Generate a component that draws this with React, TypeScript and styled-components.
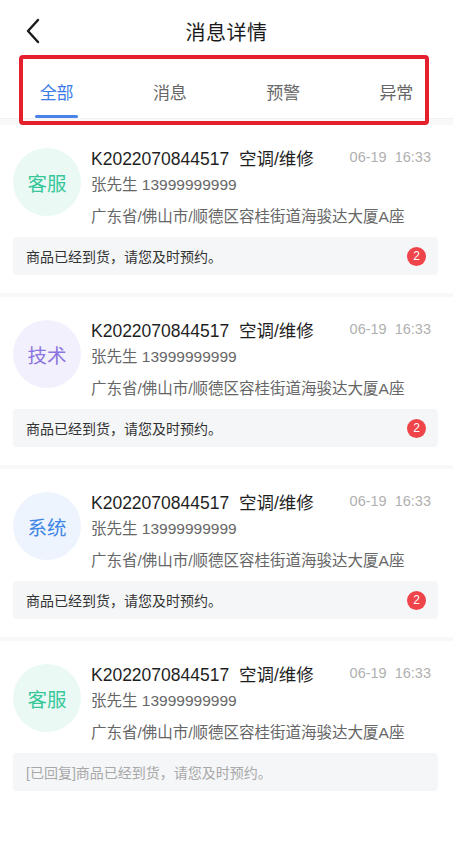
import * as React from 'react'
import styled, { createGlobalStyle } from 'styled-components'

const GlobalStyle = createGlobalStyle`
  html, body {
    margin: 0;
    padding: 0;
    background: #ffffff;
  }
  body {
    font-family: "Liberation Sans", "Noto Sans CJK SC", sans-serif;
    color: #222;
  }
`

const Screen = styled.div`
  position: relative;
  width: 453px;
  min-height: 863px;
  background: #ffffff;
  overflow: hidden;
`

const Header = styled.div`
  display: flex;
  align-items: center;
  justify-content: center;
  height: 56px;
  position: relative;
`

const BackButton = styled.div`
  position: absolute;
  left: 22px;
  top: 17px;
  width: 22px;
  height: 28px;
  display: flex;
  align-items: center;
  justify-content: center;
`

const Title = styled.div`
  font-size: 20px;
  color: #1a1a1a;
  margin-top: 6px;
  letter-spacing: 0.5px;
`

const TabBar = styled.div`
  position: relative;
  display: flex;
  height: 62px;
  border-bottom: 1px solid #f2f2f2;
`

const Tab = styled.div<{ $active?: boolean }>`
  flex: 1;
  display: flex;
  flex-direction: column;
  align-items: center;
  justify-content: flex-start;
  padding-top: 23px;
  font-size: 17px;
  color: ${p => (p.$active ? '#3b7be8' : '#666')};
  position: relative;
`

const Underline = styled.div`
  position: absolute;
  bottom: 0;
  width: 43px;
  height: 3px;
  border-radius: 2px;
  background: #4a84ea;
`

// annotation frame drawn over the tab bar
const Highlight = styled.div`
  position: absolute;
  left: 19px;
  top: 55px;
  width: 402px;
  height: 62px;
  border: 4.5px solid #e5202e;
  border-radius: 4px;
  pointer-events: none;
`

const List = styled.div`
  display: flex;
  flex-direction: column;
  gap: 4px;
  background: #f8f8f9;
  padding-top: 6px;
`

const Card = styled.div`
  background: #ffffff;
  padding: 18px 15px 18px 13px;
`

const Top = styled.div`
  display: flex;
  align-items: flex-start;
`

const Avatar = styled.div<{ $color: string; $bg: string }>`
  flex: 0 0 68px;
  width: 68px;
  height: 68px;
  margin-top: 5px;
  margin-right: 10px;
  border-radius: 50%;
  background: ${p => p.$bg};
  color: ${p => p.$color};
  font-size: 19.5px;
  display: flex;
  align-items: center;
  justify-content: center;
`

const Info = styled.div`
  flex: 1;
  display: flex;
  flex-direction: column;
  min-width: 0;
  padding-right: 7px;
`

const TitleRow = styled.div`
  display: flex;
  align-items: center;
  justify-content: space-between;
  height: 28px;
`

const OrderTitle = styled.div`
  font-size: 17.5px;
  color: #1f1f1f;
  white-space: pre;
`

const Time = styled.div`
  font-size: 14.5px;
  color: #b0b0b0;
  white-space: pre;
`

const SubLine = styled.div<{ $gap?: number }>`
  font-size: 15.5px;
  color: #666;
  height: 28px;
  line-height: 28px;
  margin-top: ${p => p.$gap || 0}px;
  white-space: pre;
`

const MessageBox = styled.div`
  margin-top: 6px;
  height: 38px;
  border-radius: 4px;
  background: #f5f6f8;
  display: flex;
  align-items: center;
  justify-content: space-between;
  padding: 0 12px 0 13px;
`

const MessageText = styled.div<{ $muted?: boolean }>`
  font-size: 14px;
  color: ${p => (p.$muted ? '#a8a8a8' : '#333')};
`

const Badge = styled.div`
  width: 19px;
  height: 19px;
  border-radius: 50%;
  background: #f0444b;
  color: #fff;
  font-size: 12px;
  display: flex;
  align-items: center;
  justify-content: center;
`

const kinds = {
  service: { label: '客服', color: '#37c79b', bg: '#eaf9f3' },
  tech: { label: '技术', color: '#8a74df', bg: '#f3f0fd' },
  system: { label: '系统', color: '#3d86e6', bg: '#eef4fd' },
}

const messages = [
  { id: 1, kind: kinds.service, replied: false, count: 2 },
  { id: 2, kind: kinds.tech, replied: false, count: 2 },
  { id: 3, kind: kinds.system, replied: false, count: 2 },
  { id: 4, kind: kinds.service, replied: true, count: 0 },
]

const tabs = ['全部', '消息', '预警', '异常']

export default () => {
  return (
    <Screen>
      <GlobalStyle />
      <Header>
        <BackButton>
          <svg width="16" height="26" viewBox="0 0 16 26" fill="none">
            <path d="M13 2 L3 13 L13 24" stroke="#1a1a1a" strokeWidth="2.4" strokeLinecap="round" strokeLinejoin="round" />
          </svg>
        </BackButton>
        <Title>消息详情</Title>
      </Header>
      <TabBar>
        {tabs.map((tab, i) => (
          <Tab key={tab} $active={i === 0}>
            {tab}
            {i === 0 && <Underline />}
          </Tab>
        ))}
      </TabBar>
      <Highlight />
      <List>
        {messages.map(msg => (
          <Card key={msg.id}>
            <Top>
              <Avatar $color={msg.kind.color} $bg={msg.kind.bg}>{msg.kind.label}</Avatar>
              <Info>
                <TitleRow>
                  <OrderTitle>K2022070844517  空调/维修</OrderTitle>
                  <Time>06-19  16:33</Time>
                </TitleRow>
                <SubLine>张先生 13999999999</SubLine>
                <SubLine $gap={4}>广东省/佛山市/顺德区容桂街道海骏达大厦A座</SubLine>
              </Info>
            </Top>
            <MessageBox>
              <MessageText $muted={msg.replied}>
                {msg.replied ? '[已回复]' : ''}商品已经到货，请您及时预约。
              </MessageText>
              {msg.count > 0 && <Badge>{msg.count}</Badge>}
            </MessageBox>
          </Card>
        ))}
      </List>
    </Screen>
  )
}
